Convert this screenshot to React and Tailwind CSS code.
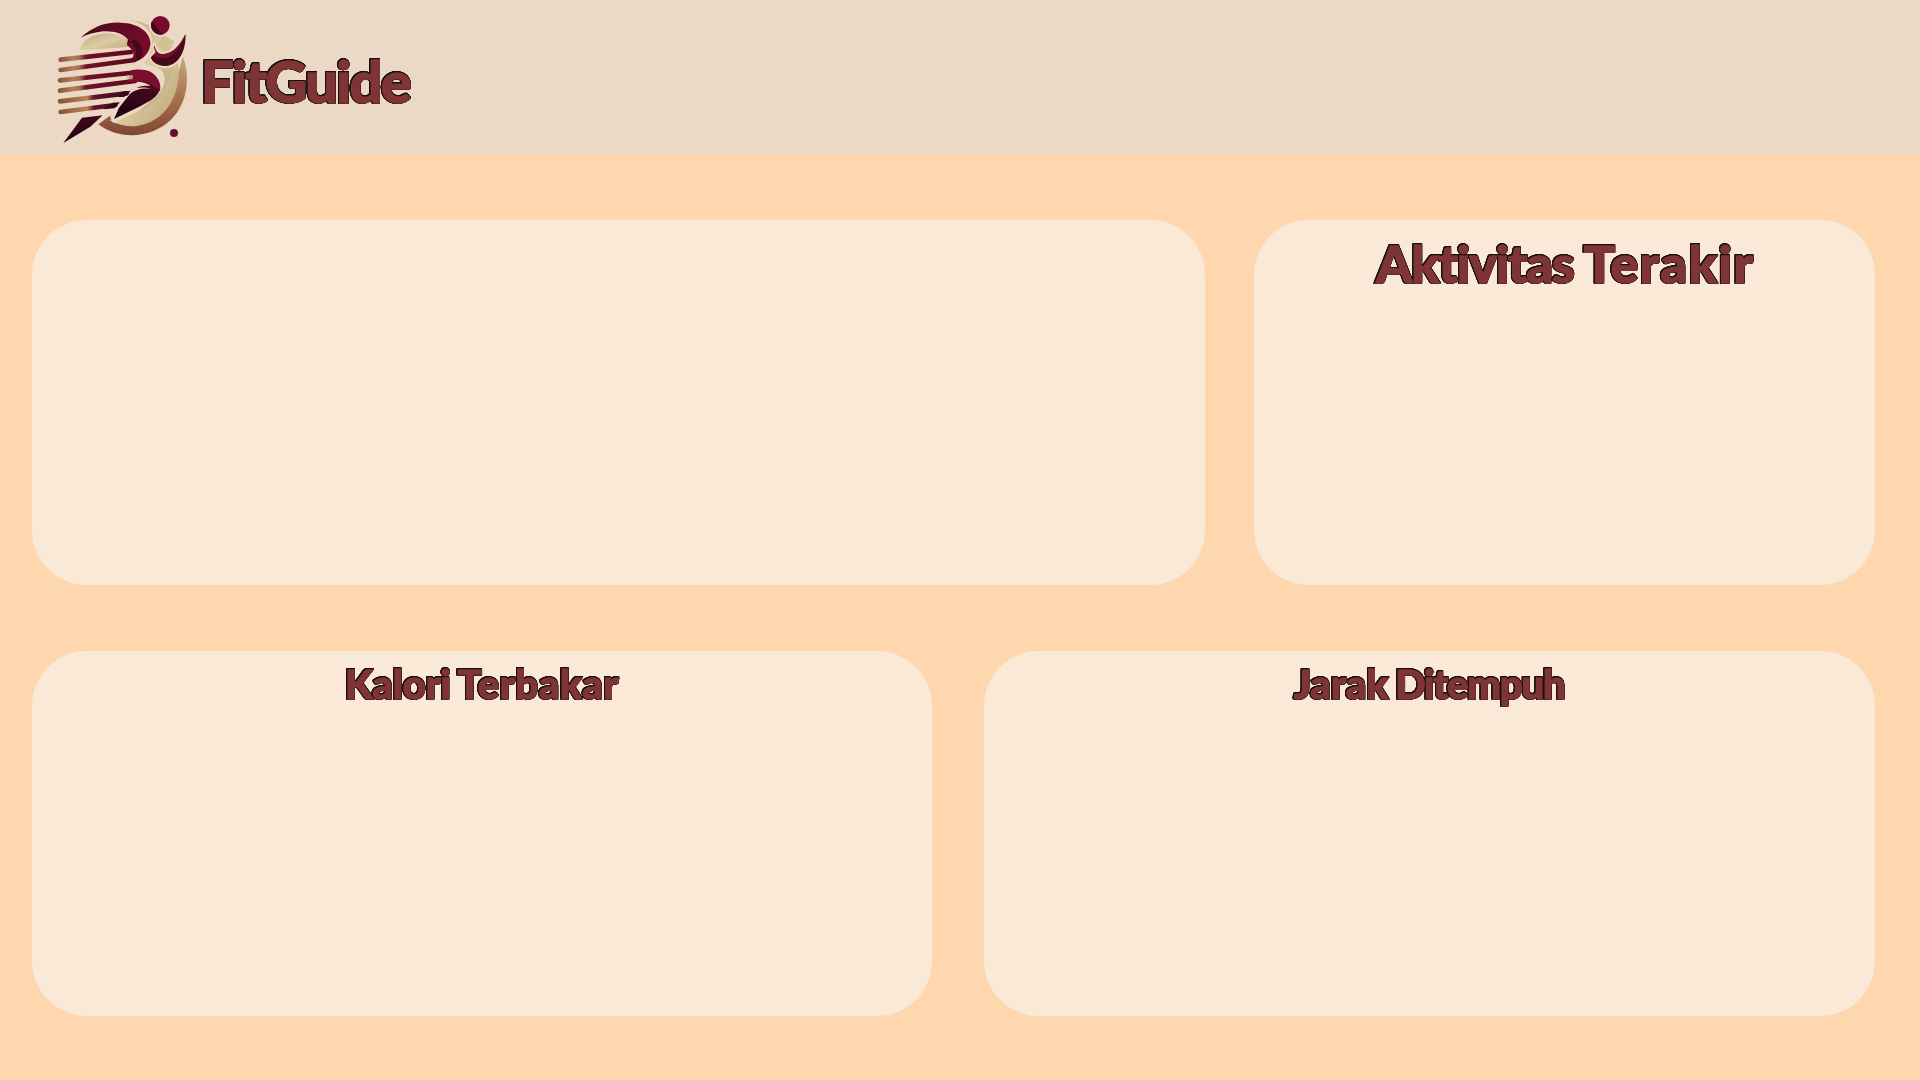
const titleStyle =
  "font-['Lato'] font-black leading-none whitespace-nowrap text-[#7f3436] [-webkit-text-stroke:1.4px_#7f3436] [filter:drop-shadow(0.7px_0_0_#151010)_drop-shadow(-0.7px_0_0_#151010)_drop-shadow(0_0.7px_0_#151010)_drop-shadow(0_-0.7px_0_#151010)]";

function Logo() {
  return (
    <svg viewBox="0 0 450 450" className="h-[150px] w-[150px] shrink-0" aria-label="FitGuide logo">
      <defs>
        <linearGradient id="rim" x1="0" y1="0" x2="0" y2="1">
          <stop offset="0" stopColor="#c5ad80" />
          <stop offset="0.5" stopColor="#a87552" />
          <stop offset="1" stopColor="#824630" />
        </linearGradient>
        <linearGradient id="disc" x1="0" y1="0" x2="1" y2="1">
          <stop offset="0" stopColor="#bea77a" />
          <stop offset="0.5" stopColor="#dccba4" />
          <stop offset="1" stopColor="#bda576" />
        </linearGradient>
        <linearGradient id="wine" x1="0" y1="0" x2="1" y2="0.6">
          <stop offset="0" stopColor="#3d0818" />
          <stop offset="0.4" stopColor="#5e0b22" />
          <stop offset="1" stopColor="#780b2b" />
        </linearGradient>
        <linearGradient id="dark" x1="0" y1="1" x2="1" y2="0">
          <stop offset="0" stopColor="#21000f" />
          <stop offset="1" stopColor="#450a1d" />
        </linearGradient>
        <linearGradient id="streak" gradientUnits="userSpaceOnUse" x1="25" y1="0" x2="250" y2="0">
          <stop offset="0" stopColor="#8b5039" />
          <stop offset="0.2" stopColor="#b57f58" />
          <stop offset="0.28" stopColor="#a46c50" />
          <stop offset="0.37" stopColor="#701029" />
          <stop offset="1" stopColor="#60091f" />
        </linearGradient>
        <linearGradient id="streakLow" gradientUnits="userSpaceOnUse" x1="25" y1="0" x2="240" y2="0">
          <stop offset="0" stopColor="#8b5039" />
          <stop offset="0.4" stopColor="#b98359" />
          <stop offset="0.5" stopColor="#64112b" />
          <stop offset="1" stopColor="#3b071b" />
        </linearGradient>
      </defs>

      <path d="M398 152C423 218 411 293 367 340C308 402 207 406 145 358L178 334C275 369 374 287 398 152Z" fill="url(#rim)" />
      <path d="M236 45C337 52 392 130 386 214C379 302 324 356 259 363C229 366 202 359 178 345L194 342L280 287L334 240L329 205L281 174Z" fill="url(#disc)" />
      <path d="M330 205C350 234 339 264 310 284L222 335C291 322 354 274 365 192L320 184Z" fill="#c3b184" opacity="0.6" />
      <path d="M342 90L374 110L351 142L318 123Z" fill="#cfc395" />

      <path d="M84 98C115 61 163 43 226 45C277 46 312 82 306 120C302 150 293 163 279 177L322 187C353 205 349 245 322 271L265 319L190 354L181 338L203 294L267 230L235 205L246 172L239 116C205 84 136 80 84 98Z" fill="#ebd9c5" />
      <path d="M89 136C96 109 118 92 151 87C190 82 226 93 238 112L245 125Z" fill="url(#disc)" />
      <g fill="none" strokeLinecap="round" stroke="#ebd9c5" strokeWidth="26">
        <path d="M32 162L242 138" />
        <path d="M32 195L250 167" />
        <path d="M30 226L255 208" />
        <path d="M30 258L234 237" />
        <path d="M30 289L224 268" />
        <path d="M32 321L190 301" />
      </g>
      <path d="M92 98C128 66 165 51 211 53C268 53 306 86 301 121C297 145 281 160 263 168H242L250 153V139L231 120L234 104C222 87 192 76 159 79C135 82 112 88 92 98Z" fill="url(#wine)" />
      <path d="M231 120L234 104C255 117 266 145 252 166H265C280 157 282 128 265 111C238 86 205 76 176 79C204 75 243 90 252 104Z" fill="#370919" opacity="0.75" />
      <path d="M192 342L207 308L240 267C258 249 305 244 326 262C315 281 298 289 274 302Z" fill="url(#dark)" />

      <g fill="none" strokeLinecap="round" strokeWidth="14">
        <path d="M32 164L244 141" stroke="url(#streak)" />
        <path d="M32 195L254 165" stroke="url(#streak)" />
        <path d="M30 226L240 204" stroke="url(#streak)" />
        <path d="M30 257L255 228" stroke="url(#streak)" />
        <path d="M30 289L230 265" stroke="url(#streakLow)" />
        <path d="M32 321L196 300" stroke="url(#streakLow)" />
      </g>
      <path d="M240 197C260 192 290 192 307 204C326 218 334 238 330 258C316 238 288 227 250 231L225 232L238 221Z" fill="#7b0d2e" />
      <path d="M233 211H250L247 223H229Z" fill="#d0b69a" opacity="0.8" />
      <path d="M260 229C290 226 314 238 330 256L322 266C306 248 280 245 260 249C272 241 292 242 302 242C290 235 276 231 260 229Z" fill="#4c0a1f" />
      <path d="M218 260L243 257L222 276H204Z" fill="#360719" />
      <path d="M189 293L210 292L193 310L160 313Z" fill="#360719" />
      <path d="M96 338L158 331L121 365L40 414Z" fill="url(#dark)" />

      <path d="M313 119C316 134 322 144 334 147C363 149 387 126 406 88C410 128 390 183 345 183C320 181 306 171 303 157L317 141Z" fill="#ebd9c5" stroke="#ebd9c5" strokeWidth="13" strokeLinejoin="round" />
      <path d="M313 119C316 134 322 144 334 147C363 149 387 126 406 88C410 128 390 183 345 183C320 181 306 171 303 157L317 141C312 133 311 126 313 119Z" fill="#760d2d" />
      <path d="M303 157L312 150C337 171 380 162 406 88C404 158 374 182 345 183C320 181 306 171 303 157Z" fill="#480919" />
      <circle cx="331" cy="61" r="34" fill="#ebd9c5" />
      <circle cx="331" cy="61" r="28" fill="#760c2d" />
      <path d="M306 49A28 28 0 0 0 341 87C325 79 316 60 306 49Z" fill="#40091c" />
      <circle cx="372" cy="384" r="12" fill="#6b0d2b" />
    </svg>
  );
}

function Card({ className, children }) {
  return <section className={`h-[365px] rounded-[55px] bg-[#fae9d7] ${className}`}>{children}</section>;
}

export default function App() {
  return (
    <div className="h-[1080px] w-[1920px] overflow-hidden bg-[#ffd7ae]">
      <header className="flex h-[155px] items-start bg-[#ebd9c5] pt-[5px] pl-[50px]">
        <Logo />
        <h1 className={`${titleStyle} mt-[47px] ml-[1px] text-[58px] tracking-[-1.8px]`}>FitGuide</h1>
      </header>
      <main className="flex flex-col gap-[66px] pt-[65px] pr-[45px] pl-[32px]">
        <div className="flex justify-between">
          <Card className="w-[1173px]" />
          <Card className="w-[621px]">
            <h2 className={`${titleStyle} flex gap-[10px] pt-[17px] pl-[122px] text-[52px]`}>
              <span className="tracking-[-1.2px]">Aktivitas</span>
              <span className="tracking-[1.5px]">Terakir</span>
            </h2>
          </Card>
        </div>
        <div className="flex justify-between">
          <Card className="w-[900px]">
            <h2 className={`${titleStyle} flex gap-[7px] pt-[13px] pl-[313px] text-[40px]`}>
              <span className="tracking-[-0.2px]">Kalori</span>
              <span className="tracking-[0.6px]">Terbakar</span>
            </h2>
          </Card>
          <Card className="w-[891px]">
            <h2 className={`${titleStyle} flex gap-[7px] pt-[13px] pl-[310px] text-[40px]`}>
              <span className="tracking-[0px]">Jarak</span>
              <span className="tracking-[-1.2px]">Ditempuh</span>
            </h2>
          </Card>
        </div>
      </main>
    </div>
  );
}
